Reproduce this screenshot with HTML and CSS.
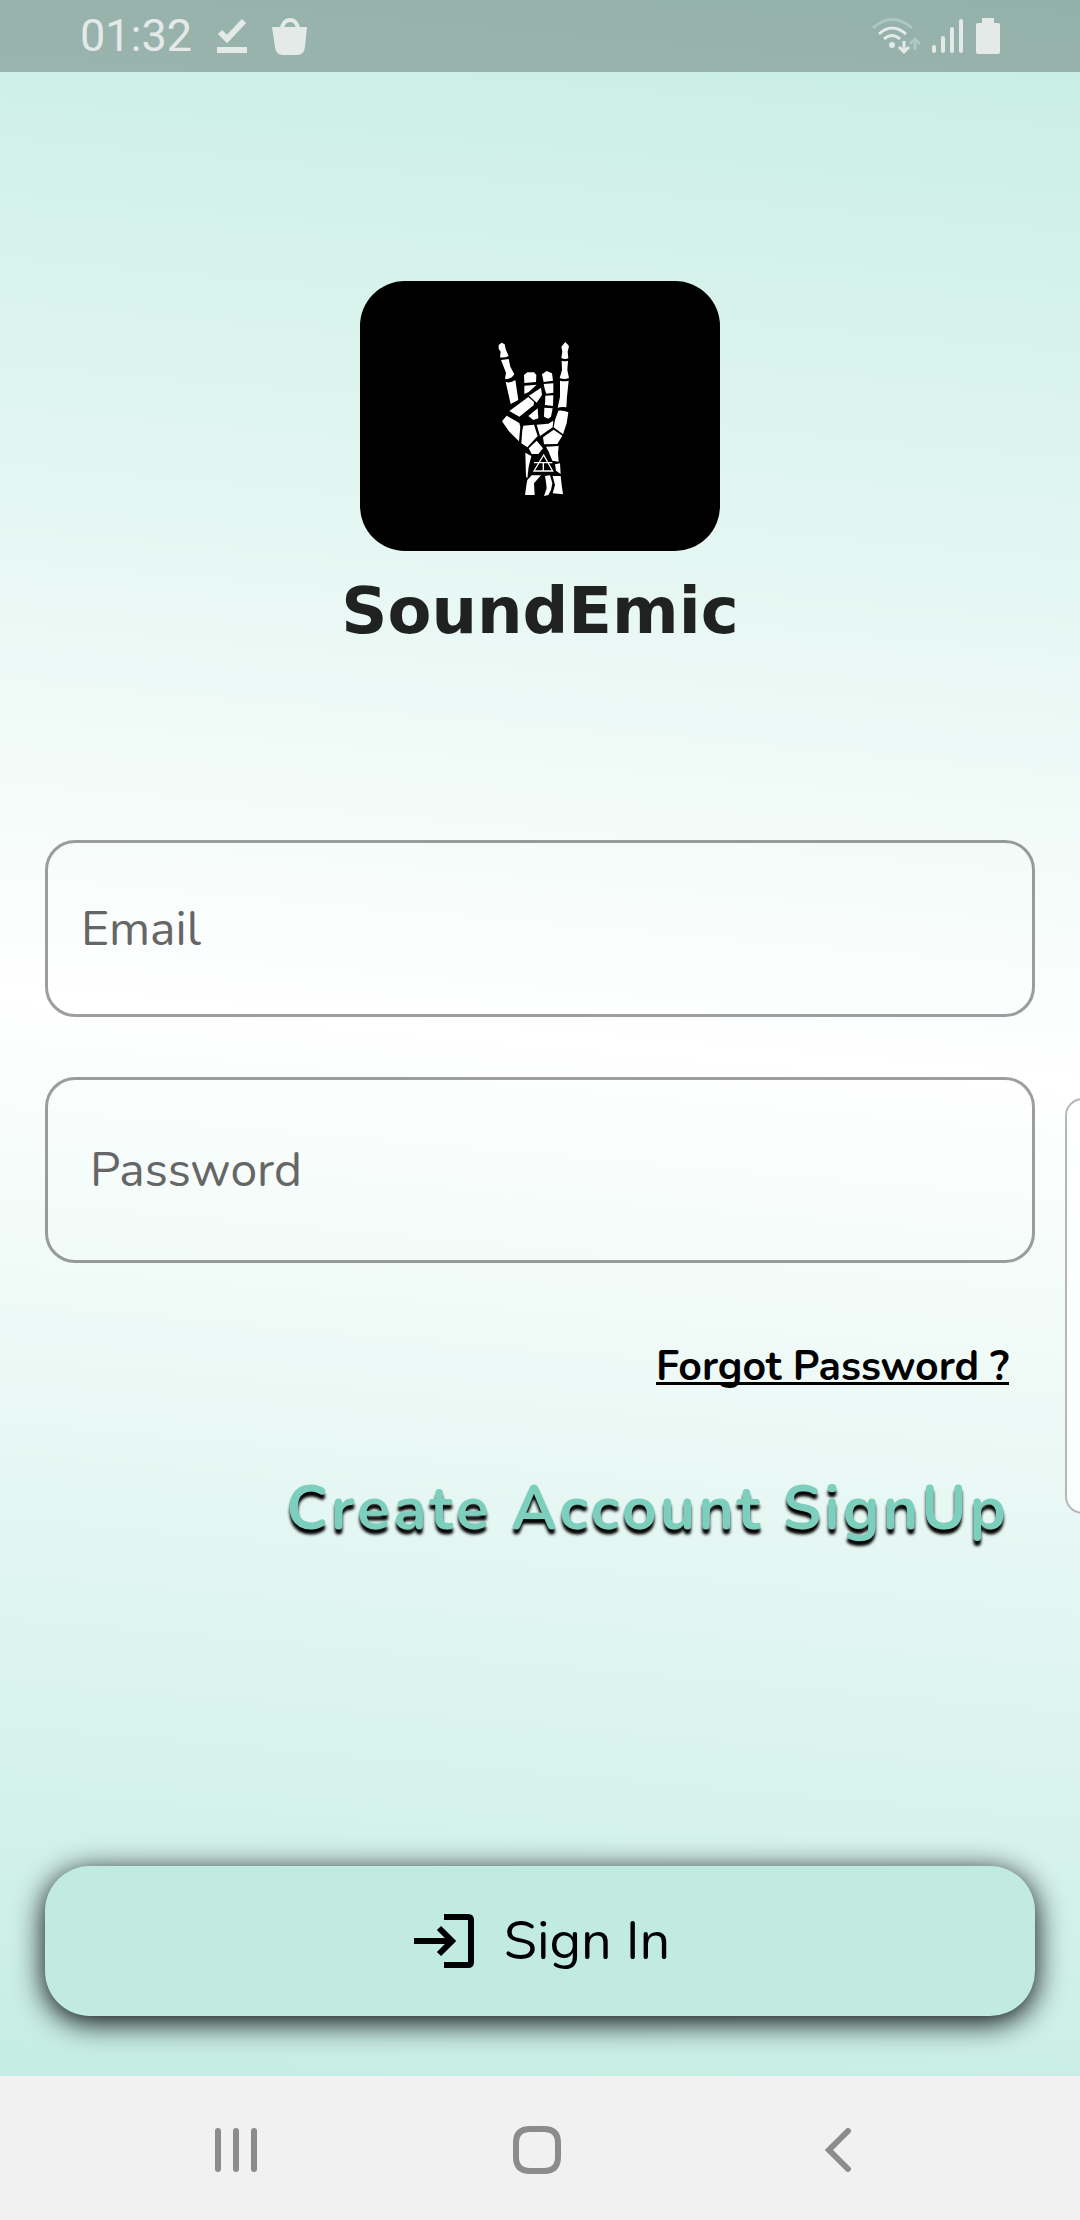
FILE: index.html
```html
<!DOCTYPE html>
<html lang="en">
<head>
<meta charset="utf-8">
<meta name="viewport" content="width=device-width, initial-scale=1">
<title>SoundEmic</title>
<link rel="stylesheet" href="styles.css">
</head>
<body>
<div class="screen">
  <header class="status">
    <div class="status-left">
      <time class="clock">01:32</time>
      <svg width="30" height="36" viewBox="0 0 30 36"><path d="M3 14l7 7L27 3" fill="none" stroke="currentColor" stroke-width="6"/><path d="M0 29h30v6H0z" fill="currentColor"/></svg>
      <svg width="36" height="38" viewBox="0 0 36 38"><path d="M10 12a8 9 0 0 1 16 0" fill="none" stroke="currentColor" stroke-width="4"/><path d="M0 10h35l-2 20q-1 8-8 8H11q-7 0-8-8z" fill="currentColor"/></svg>
    </div>
    <div class="status-right">
      <svg width="48" height="38" viewBox="0 0 48 38" fill="none" stroke="currentColor" stroke-width="3"><path class="faint" d="M1 11q19-17 39 0"/><path d="M7 17q13-12 27 0M12 22q8-7 16 0"/><circle cx="20" cy="28" r="3" fill="currentColor" stroke="none"/><path d="M32 24v11M27 30l5 5 5-5"/><path class="faint" d="M43 33V22M38 27l5-5 5 5"/></svg>
      <svg width="32" height="36" viewBox="0 0 32 36" stroke="currentColor" stroke-width="4" stroke-linecap="round"><path d="M2 29v4M11 20v13M20 11v22M29 3v30"/></svg>
      <svg width="24" height="36" viewBox="0 0 24 36"><path d="M6 0h12v5h4q2 0 2 2v27q0 2-2 2H2q-2 0-2-2V7q0-2 2-2h4z" fill="currentColor"/></svg>
    </div>
  </header>

  <main class="content">
    <div class="brand">
      <div class="logo">
        <svg width="140" height="190" viewBox="0 3 420 570" fill="#fff" role="img" aria-label="Skeleton hand">
          <path d="M86 75L95 68 104 73 107 88 116 108Q104 114 90 112L92 95 86 86zM93 120L116 117 121 140 133 163Q122 180 105 176L108 158zM107 186Q122 190 136 180L145 240 122 252z"/>
          <path d="M274 80L286 66 297 78 293 95 295 115Q284 119 274 114L277 95zM275 122Q284 126 294 122L292 150 297 174Q283 180 269 174L276 150zM270 182Q283 186 296 182L291 230 289 262Q275 260 263 263L270 230zM265 272Q280 270 295 277L290 310 279 343 251 322 255 300z"/>
          <path d="M162 165L172 157 192 157 199 165 198 186 163 189zM163 197L200 194 176 216 163 222zM216 163L230 153 246 160 249 182 221 186zM221 192L250 190 250 218 229 221 225 210zM226 227L250 226 249 258 225 255zM223 263L248 265 243 290 235 296 222 290z"/>
          <path d="M118 273L175 231 192 246 191 256 148 290zM177 227L213 203 216 225 200 248zM175 288L203 265 205 295 190 300z"/>
          <path d="M96 304L110 287 148 309 151 320 147 364 118 335zM160 317L192 314 203 348 172 382 154 370 157 330zM200 314L235 311 250 302 248 322 210 348zM251 329L277 347 262 372 222 373 219 352zM176 385L200 362 219 385 205 402 185 402zM228 380L266 378 264 400 266 425 247 422 236 395z"/>
          <path d="M166 398L184 408 176 440 172 475 168 470zM255 433L270 430 272 462 258 452zM172 480L185 466 213 466 192 490 194 525 165 525 170 490zM225 468L240 466 247 490 243 510 235 525 222 528 230 505 228 487zM248 468L272 468 275 495 279 523 248 520 255 495z"/>
          <path d="M221 405L192 453H248zM192 428H247M220 428V453" fill="none" stroke="#fff" stroke-width="4"/>
        </svg>
      </div>
      <h1 class="title">SoundEmic</h1>
    </div>

    <form class="form" id="signin">
      <input class="field email" type="email" placeholder="Email" aria-label="Email">
      <input class="field password" type="password" placeholder="Password" aria-label="Password">
    </form>

    <nav class="links">
      <a class="forgot" href="#forgot">Forgot Password ?</a>
      <a class="create" href="#signup">Create Account SignUp</a>
    </nav>

    <button class="signin" type="submit" form="signin">
      <svg width="60" height="54" viewBox="0 0 60 54" fill="none" stroke="currentColor" stroke-width="6"><path d="M30 3h24q3 0 3 3v42q0 3-3 3H30M0 27h37M25 14l13 13-13 13"/></svg>
      Sign In
    </button>
  </main>
  <aside class="edge-panel"></aside>
</div>

<footer class="navbar">
  <button class="nav-button" aria-label="Recents"><svg width="42" height="46" viewBox="0 0 42 46" stroke="currentColor" stroke-width="6" stroke-linecap="round"><path d="M3 4v38M21 4v38M39 4v38"/></svg></button>
  <button class="nav-button" aria-label="Home"><svg width="48" height="48" viewBox="0 0 48 48" fill="none" stroke="currentColor" stroke-width="6"><path d="M17 3h14q14 0 14 14v14q0 14-14 14H17Q3 45 3 31V17Q3 3 17 3z"/></svg></button>
  <button class="nav-button" aria-label="Back"><svg width="28" height="46" viewBox="0 0 28 46" fill="none" stroke="currentColor" stroke-width="6" stroke-linecap="round"><path d="M24 4L5 23l19 19"/></svg></button>
</footer>
</body>
</html>
```
FILE: styles.css
```css
* {
  box-sizing: border-box;
}

body {
  margin: 0;
  min-height: 100vh;
  display: flex;
  flex-direction: column;
  font-family: Nunito, Lato, sans-serif;
  color: #000;
}

svg {
  display: block;
  flex: none;
}

button {
  border: 0;
  font: inherit;
  color: inherit;
}

.screen {
  position: relative;
  flex: 1;
  display: flex;
  flex-direction: column;
  overflow: hidden;
  background: linear-gradient(185deg, #c5ede3, #fff 50%, #c5ede3);
}

/* Status bar */
.status {
  height: 72px;
  padding: 0 80px;
  display: flex;
  align-items: center;
  justify-content: space-between;
  background: rgba(0, 0, 0, 0.25);
  color: #e3eae8;
}

.status-left {
  display: flex;
  align-items: center;
  gap: 25px;
}

.status-right {
  display: flex;
  align-items: center;
  gap: 12px;
}

.clock {
  font-family: Roboto, sans-serif;
  font-size: 45px;
  line-height: 72px;
}

.faint {
  opacity: 0.35;
}

/* Sign-in content */
.content {
  flex: 1;
  display: flex;
  flex-direction: column;
  padding: 209px 45px 60px;
}

.brand {
  display: flex;
  flex-direction: column;
  align-items: center;
}

.logo {
  width: 360px;
  height: 270px;
  display: flex;
  align-items: center;
  justify-content: center;
  border-radius: 45px;
  background: #000;
}

.title {
  margin: 20px 0 0;
  font-family: "DejaVu Sans", sans-serif;
  font-size: 64px;
  font-weight: 700;
  line-height: 80px;
  color: #1f2221;
}

.form {
  display: flex;
  flex-direction: column;
  gap: 60px;
  margin-top: 189px;
}

.field {
  width: 100%;
  border: 3px solid rgba(0, 0, 0, 0.38);
  border-radius: 30px;
  background: transparent;
  font-family: inherit;
  font-size: 48px;
  color: #000;
}

.field::placeholder {
  color: #666;
  opacity: 1;
}

.email {
  height: 177px;
  padding: 0 33px;
}

.password {
  height: 186px;
  padding: 0 42px;
}

.links {
  display: flex;
  flex-direction: column;
  align-items: flex-end;
  gap: 72px;
  margin: 74px 26px 0 0;
}

.forgot {
  font-size: 41px;
  font-weight: 700;
  line-height: 60px;
  color: #000;
  text-decoration: underline;
  text-decoration-skip-ink: none;
  text-decoration-thickness: 3px;
}

.create {
  font-size: 61px;
  font-weight: 700;
  line-height: 80px;
  letter-spacing: 3px;
  color: #7dcfbd;
  text-decoration: none;
  text-shadow: 0 5px 3px #000;
}

.signin {
  height: 150px;
  margin-top: auto;
  padding: 0 0 0 4px;
  display: flex;
  align-items: center;
  justify-content: center;
  gap: 30px;
  border-radius: 45px;
  background: #c1ebe0;
  box-shadow: 0 6px 30px #000;
  font-size: 54px;
}

/* Handle of the system side panel, over the app's right edge */
.edge-panel {
  position: absolute;
  top: 1098px;
  right: -20px;
  width: 35px;
  height: 416px;
  border: 2px solid #b4b9b8;
  border-radius: 20px;
  background: rgba(255, 255, 255, 0.75);
}

/* System navigation */
.navbar {
  height: 144px;
  padding: 4px 6px 0 0;
  display: flex;
  justify-content: center;
  background: #f1f1f1;
  color: #8c8c8c;
}

.nav-button {
  width: 28%;
  display: flex;
  align-items: center;
  justify-content: center;
  background: none;
}
```
